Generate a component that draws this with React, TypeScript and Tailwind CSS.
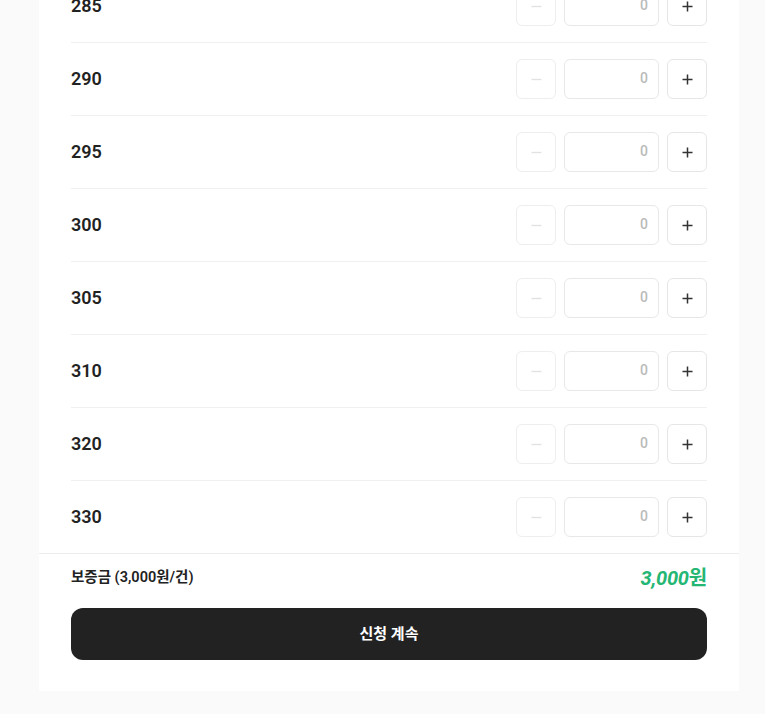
const sizes = [285, 290, 295, 300, 305, 310, 320, 330];

function MinusIcon() {
  return (
    <svg width="11" height="11" viewBox="0 0 11 11" fill="none">
      <path d="M0.5 5.5h10" stroke="currentColor" strokeWidth="1.4" />
    </svg>
  );
}

function PlusIcon() {
  return (
    <svg width="11" height="11" viewBox="0 0 11 11" fill="none">
      <path d="M0.5 5.5h10M5.5 0.5v10" stroke="currentColor" strokeWidth="1.5" />
    </svg>
  );
}

export default function App() {
  return (
    <main className="min-h-[714px] w-full overflow-hidden bg-[#fafafa] font-['Roboto','Noto_Sans_CJK_KR',sans-serif] text-[#222]">
      <div className="-mt-[30px] ml-[39px] w-[700px] bg-white">
        <div className="px-8">
          {sizes.map((size, index) => (
            <div
              key={size}
              className={`flex items-center justify-between py-4 ${
                index < sizes.length - 1 ? "border-b border-[#f0f0f0]" : ""
              }`}
            >
              <span className="text-[18px] font-semibold leading-none">{size}</span>
              <div className="flex items-center gap-2">
                <button className="flex h-10 w-10 items-center justify-center rounded-md border border-[#eeeeee] bg-white text-[#e2e2e2]">
                  <MinusIcon />
                </button>
                <div className="flex h-10 w-[95px] items-center justify-end rounded-md border border-[#e8e8e8] bg-white pb-[3px] pr-[10px] text-sm font-medium text-[#bbbbbb]">
                  0
                </div>
                <button className="flex h-10 w-10 items-center justify-center rounded-md border border-[#e6e6e6] bg-white text-[#333]">
                  <PlusIcon />
                </button>
              </div>
            </div>
          ))}
        </div>

        <div className="border-t border-[#ececec] px-8 pb-[31px] pt-[10px]">
          <div className="flex h-7 items-center justify-between">
            <span className="text-[14.5px] font-semibold">보증금 (3,000원/건)</span>
            <span className="text-[20px] font-bold tracking-[-0.01em] text-[#24b673]">
              <span className="italic">3,000</span>원
            </span>
          </div>
          <button className="mt-4 flex h-[52px] w-full items-center justify-center rounded-xl bg-[#222] text-[15px] font-bold text-white">
            신청 계속
          </button>
        </div>
      </div>
    </main>
  );
}
